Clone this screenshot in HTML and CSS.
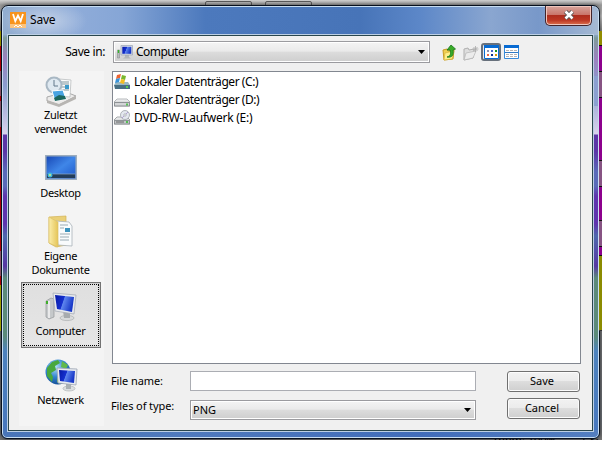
FILE: index.html
```
<!DOCTYPE html>
<html lang="de">
<head>
<meta charset="utf-8">
<title>Save</title>
<link rel="stylesheet" href="styles.css">
</head>
<body>
<svg width="0" height="0" class="defs">
  <defs>
    <linearGradient id="scr" x1="0" y1="0" x2="1" y2="0.3"><stop offset="0" stop-color="#0719a4"/><stop offset=".48" stop-color="#1530cf"/><stop offset=".52" stop-color="#5f86ee"/><stop offset="1" stop-color="#1838c8"/></linearGradient>
    <linearGradient id="desk" x1="0" y1="0" x2="1" y2="1"><stop offset="0" stop-color="#1746b4"/><stop offset=".5" stop-color="#3f86e8"/><stop offset="1" stop-color="#1c56c8"/></linearGradient>
    <linearGradient id="fold" x1="0" y1="0" x2="1" y2="0"><stop offset="0" stop-color="#fbedaa"/><stop offset="1" stop-color="#e5c558"/></linearGradient>
    <linearGradient id="disk" x1="0" y1="0" x2="0" y2="1"><stop offset="0" stop-color="#fafafa"/><stop offset="1" stop-color="#a9adb0"/></linearGradient>
    <radialGradient id="globe" cx=".4" cy=".3" r=".8"><stop offset="0" stop-color="#b5e2fb"/><stop offset=".5" stop-color="#3184cf"/><stop offset="1" stop-color="#0b3d86"/></radialGradient>
    <symbol id="pc" viewBox="0 0 32 30">
      <path d="M1 9l5-3 3 1v18l-5 2-3-2z" fill="#c5c8ca" stroke="#93979a" stroke-width=".7"/>
      <path d="M4 9v17" stroke="#f4f5f5" stroke-width="1.5"/><path d="M2 9v3" stroke="#3fae2b" stroke-width="2"/>
      <ellipse cx="22" cy="26" rx="7" ry="2.6" fill="#d8dadb" stroke="#a4a7aa" stroke-width=".6"/>
      <path d="M18 19l7 1v6h-6z" fill="#a7abae"/>
      <path d="M8 1l23 2-2 19-19-3z" fill="#e7e9ed" stroke="#a7adb7" stroke-width=".8"/>
      <path d="M10 3l19 2-2 15-15-3z" fill="url(#scr)"/>
    </symbol>
    <symbol id="pc-small" viewBox="0 0 16 14">
      <path d="M.5 5h2v8h-2z" fill="#b9bcbd" stroke="#8b8f91" stroke-width=".6"/><path d="M1.500 5v3" stroke="#35b52c" stroke-width="1.300"/>
      <path d="M8 10h4v2l2 1.500H6L8 12z" fill="#b4b7ba"/>
      <path d="M4 .5h11.500v9.500H4z" fill="#d9dce4" stroke="#9aa3b5" stroke-width=".7"/><path d="M5.300 1.800h9v7h-9z" fill="url(#scr)"/>
    </symbol>
  </defs>
</svg>
<div class="backdrop">
  <div class="ghost-tools"><i></i><i></i></div>
  <section class="window">
    <header class="titlebar">
      <svg class="app-icon" viewBox="0 0 16 16"><path fill="#f7941d" d="M0 0h16v12H0z"/><path fill="#fbc47e" d="M0 12h16v4H0z"/><path d="M3 2l2.300 7L8 3.500 10.700 9 13 2" fill="none" stroke="#fff" stroke-width="1.800"/><path d="M4 15l2-2 2 2 2-2 2 2" fill="none" stroke="#fff"/></svg>
      <span class="title">Save</span>
      <button class="close"><svg width="12" height="10" viewBox="0 0 12 10"><path d="M2.500 1.500l7 7M9.500 1.500l-7 7" stroke="#555" stroke-width="4.300"/><path d="M2.500 1.500l7 7M9.500 1.500l-7 7" stroke="#fff" stroke-width="2.500"/></svg></button>
    </header>
    <main class="client">
      <div class="lookin">
        <label>Save in:</label>
        <div class="combo location"><svg width="16" height="14"><use href="#pc-small"/></svg><span>Computer</span><b class="arrow"></b></div>
        <div class="tools">
          <svg width="14" height="17" viewBox="0 0 14 17"><path d="M1 6l4-1 1 2 6-1-1 9-9 1z" fill="#f0cf52" stroke="#c89d24"/><path d="M3 9l9-2-2 8-8 1z" fill="#fff08c" stroke="#d4af35" stroke-width=".6"/><path d="M5 13c4-1 4-4 3-7H5l4-5 4.500 4-2.500 1c1 5-1 8-6 7z" fill="#39ac28" stroke="#19751a" stroke-width=".8"/></svg>
          <svg width="16" height="17" viewBox="0 0 16 17"><path d="M1 5l4-1 1 2 5-1v4L10 14l-9 2z" fill="#dedede" stroke="#b0b0b0"/><path d="M3 9l10-2-3 7-9 2z" fill="#ececec" stroke="#b4b4b4" stroke-width=".7"/><path d="M12.500 2v6M9.500 5h6M10.500 3l4 4m0-4l-4 4" stroke="#aaa" stroke-width=".8"/></svg>
          <span class="toggle"><svg width="15" height="14" viewBox="0 0 15 14"><path fill="#fff" stroke="#086bd2" d="M.5.5h14v13H.5z"/><path fill="#086bd2" d="M0 0h15v3H0z"/><path fill="#8990b5" d="M3 5h2v2H3z"/><path fill="#4764c9" d="M7 5h2v2H7z"/><path fill="#159020" d="M11 5h2v2h-2z"/><path fill="#ef6846" d="M3 9h2v2H3z"/><path fill="#0b2f91" d="M7 9h2v2H7z"/><path fill="#d89a00" d="M11 9h2v2h-2z"/></svg></span>
          <svg width="15" height="14" viewBox="0 0 15 14"><path fill="#fff" stroke="#3689d8" d="M.5.5h14v13H.5z"/><path fill="#086bd2" d="M0 0h15v3H0z"/><path d="M2 5.500h11M2 9.500h11M2 11.500h11" stroke="#b4b4b4" stroke-dasharray="3 1"/><path d="M1 7.500h13" stroke="#2e79c4"/></svg>
        </div>
      </div>
      <div class="body">
        <nav class="places">
          <a class="place recent"><svg width="32" height="32" viewBox="0 0 32 32"><path d="M2 21l19-5 10 4-17 9-12-4z" fill="#ecebea" stroke="#aaa"/><path d="M2 24l12 4 17-8v3l-17 8-12-4z" fill="#b7b5b2"/><path d="M14 3l12 1-1 17-12-1z" fill="#fcfcfc" stroke="#b1b6b8" stroke-width=".7"/><path d="M16 6h8M16 8h8M16 11h4M16 14h8" stroke="#7f959c"/><path d="M20 9h4v4h-4z" fill="#3b9aca"/><circle cx="9" cy="9" r="7.500" fill="#dfe9f1" stroke="#a9b8c4" stroke-width="2"/><path d="M9 4v6h4" fill="none" stroke="#63798b"/><path d="M7 15l11-1 3 9-11 2z" fill="#49a4e2" stroke="#fff"/><path d="M9 22l5-3 6 1 1 3-11 2z" fill="#1d675e"/></svg><span>Zuletzt<br>verwendet</span></a>
          <a class="place desktop"><svg width="32" height="25" viewBox="0 0 32 25"><path fill="url(#desk)" stroke="#9cacbc" stroke-width="1.500" d="M.8.8h30.400v23.400H.8z"/><path d="M2 19h28v4H2z" fill="#233d59"/><path d="M8 19h22" stroke="#8eabc6" stroke-width=".7"/><circle cx="5" cy="20" r="2.500" fill="#43b7d8"/><circle cx="5" cy="20" r="1" fill="#d9e97c"/></svg><span>Desktop</span></a>
          <a class="place docs"><svg width="27" height="33" viewBox="0 0 27 33"><path d="M1 2l17-1v29L8 32l-7-4z" fill="#ead078" stroke="#d2b253" stroke-width=".7"/><path d="M8 6l13 1 3 4v20l-14-1z" fill="#f9fbfc" stroke="#a9b3b9" stroke-width=".8"/><path d="M12 10h8M12 13h4M12 19h10M12 22h9M12 25h9" stroke="#9aabb4"/><path d="M17 13h5v4h-5z" fill="#3a92bd"/><path d="M1 2l9 5v25l-9-4z" fill="url(#fold)" stroke="#dcc168" stroke-width=".7"/></svg><span>Eigene<br>Dokumente</span></a>
          <a class="place computer selected"><svg width="32" height="30"><use href="#pc"/></svg><span>Computer</span></a>
          <a class="place network"><svg width="33" height="33" viewBox="0 0 33 33"><circle cx="13" cy="13" r="12.500" fill="url(#globe)"/><path d="M2 9l5-6 6-2 2 3-5 3 1 4-5 3 2 4-1 5-5-6z" fill="#49a83f"/><path d="M17 2l6 4-2 4-5-2zM12 19l5 2-2 4-3-2z" fill="#62b94b"/><ellipse cx="24" cy="29.500" rx="6" ry="2.500" fill="#dcdfe1" stroke="#a7abae" stroke-width=".6"/><path d="M21 24l5 1v5h-5z" fill="#aab0b4"/><path d="M12 9l20 1-1 16-18-2z" fill="#e7eaef" stroke="#9ca5b3" stroke-width=".8"/><path d="M14 11l16 1-1 12-14-2z" fill="url(#scr)"/></svg><span>Netzwerk</span></a>
        </nav>
        <div class="right">
          <ul class="files">
            <li><svg width="16" height="16" viewBox="0 0 16 16"><path d="M2 8h12l2 3H0z" fill="#9bb8c3"/><path d="M0 11h16v4H1z" fill="#486f83"/><path d="M13 12v2" stroke="#5bed40" stroke-width="1.500"/><path d="M3 1l4-1-1 4-4 1z" fill="#ee6430"/><path d="M8 1l4 1-1 4-4-1z" fill="#7ab82e"/><path d="M2 5l4-1-1 4-4 1z" fill="#3994da"/><path d="M7 5l4 1-1 4-4-1z" fill="#f4bd24"/></svg>Lokaler Datenträger (C:)</li>
            <li><svg width="16" height="16" viewBox="0 0 16 16"><path d="M3 7h10l3 3v4H0v-4z" fill="url(#disk)" stroke="#a2a6a9" stroke-width=".8"/><path d="M.4 10.500h15.200V14H.4z" fill="#d3d5d7" stroke="#7b8083" stroke-width=".8"/><path d="M13 11.500v2" stroke="#2dbd28" stroke-width="1.500"/></svg>Lokaler Datenträger (D:)</li>
            <li><svg width="16" height="16" viewBox="0 0 16 16"><path d="M3 7h10l3 3v4H0v-4z" fill="url(#disk)" stroke="#8e9295" stroke-width=".8"/><circle cx="11" cy="5" r="4.500" fill="#e4e8ef" stroke="#9fa5aa" stroke-width=".8"/><path d="M11 5l3-3M11 5L8 8" stroke="#b3a3d3"/><circle cx="11" cy="5" r="1.200" fill="#fff" stroke="#898f94" stroke-width=".6"/><path d="M.4 10.500h15.200V14H.4z" fill="#c4c7c9" stroke="#767b7e" stroke-width=".7"/><path d="M2 12h8" stroke="#666"/><path d="M13 11v2" stroke="#2dbd28" stroke-width="1.500"/></svg>DVD-RW-Laufwerk (E:)</li>
          </ul>
          <div class="form">
            <label>File name:</label><div class="field"></div><button class="btn">Save</button>
            <label class="type-label">Files of type:</label><div class="combo type"><span>PNG</span><b class="arrow"></b></div><button class="btn">Cancel</button>
          </div>
        </div>
      </div>
    </main>
  </section>
  <div class="strip strip-left"></div>
  <div class="strip strip-right"></div>
  <div class="behind"><span>Zoom: 100%</span><span>| Scal</span></div>
</div>
</body>
</html>
```
FILE: styles.css
```
* { box-sizing: border-box; }
body { margin: 0; background: #fff; color: #000; font: 11px/14px "Noto Sans", sans-serif; overflow: hidden; }
svg { display: block; flex: none; }
.defs { position: absolute; }
.backdrop { position: relative; width: 602px; height: 440px; padding: 5px 0 0 1px; overflow: hidden; background: linear-gradient(#d0d0d0, #999 5px, #c9c9c9 16px, #888 30px, #777 300px, #6d7177 420px, #747474); }
.ghost-tools { position: absolute; left: 205px; top: 1px; display: flex; gap: 13px; }
.ghost-tools i { width: 47px; height: 8px; border: 1px solid #5b5b5b; border-radius: 2px; }
.strip { position: absolute; top: 31px; height: 300px; }
.strip-left { left: 0; width: 1px; background: linear-gradient(#918c00 0 15px, #a80008 15px 40px, #875368 40px 65px, #a80008 65px 70px, #875368 70px 96px, #a80008 96px 220px, #875368 220px 245px, #a80008 245px 254px, #9b9d00 254px); }
.strip-right { right: 0; width: 3px; background: linear-gradient(#918c00 0 14px, #111 14px 15px, #8d008d 15px 40px, #111 40px 41px, #875383 41px 66px, #111 66px 67px, #8d008d 67px 129px, #111 129px 130px, #875383 130px 155px, #111 155px 156px, #8d008d 156px 189px, #111 189px 190px, #875383 190px 215px, #111 215px 216px, #8d008d 216px 224px, #111 224px 225px, #8b8b00 225px 299px, #333 299px); }
.behind { position: absolute; left: 492px; top: 433px; height: 7px; display: flex; gap: 25px; white-space: nowrap; clip-path: inset(6px 0 0 0); }
.window { position: relative; width: 599px; height: 434px; padding: 0 6px 7px 6px; display: flex; flex-direction: column; border: 1px solid #07101e; border-radius: 7px 7px 6px 6px; box-shadow: inset 0 0 0 1px #c7ddf1, 0 0 4px #0009; background: linear-gradient(90deg, #4975b8, #4f7abc 30%, #416dba 70%, #547fc0) bottom / 100% 8px no-repeat, linear-gradient(90deg, #8ba0d0 0 0) right 70px / 7px 30px no-repeat, linear-gradient(#8eacd3 0 28px, #7d9b9a 32px, #9b81bd 52px, #8a9dce 80px, #d9d2ec 128px, #5b36a6 129px 145px, #596bb8 166px 180px, #5e35ad 190px 218px, #4d69ad 230px, #5637a3 260px, #5b8a79 272px 330px, #4c82bd 345px, #4676be); }
.titlebar { flex: none; height: 28px; margin: 1px -5px 0; padding: 5px 6px 0 7px; display: flex; border-radius: 5px 5px 0 0; background: radial-gradient(ellipse 42px 20px at 42px 14px, #d0dbeccc, #d0dbec00), linear-gradient(90deg, #92adcf 0, #8facd9 12%, #86a6d6 20%, #4c79bd 34%, #4774b8 60%, #5c87c8 70%, #8aa6d0 82%, #7898c9 90%, #a5b9d3); }
.app-icon { width: 16px; height: 16px; }
.title { margin: -1px 0 0 4px; font-size: 12px; line-height: 17px; letter-spacing: -.2px; }
.close { width: 47px; height: 20px; margin: -6px 0 0 auto; padding: 0; display: grid; place-items: center; border: 1px solid #42242a; border-top: 0; border-radius: 0 0 5px 5px; box-shadow: inset 0 0 0 1px #efc6bd; background: linear-gradient(#d6a59d, #c97368 48%, #ae2d1e 50%, #bd3824 75%, #dc7250); }
.close svg { margin-top: -2px; }
.client { flex: 1; min-height: 0; padding: 5px 11px 0 13px; border: 1px solid #29464d; box-shadow: 0 0 0 1px #bccfe4; background: #f0f0f0; }
.lookin { height: 22px; display: flex; align-items: center; }
.lookin label { width: 83px; margin-right: 8px; text-align: right; font-size: 12px; letter-spacing: -.4px; }
.combo { display: flex; align-items: center; height: 22px; padding: 0 4px 0 3px; border: 1px solid #9b9b9f; box-shadow: inset 0 0 0 1px #fff; background: linear-gradient(#f4f4f4, #eaeaea 46%, #dcdcdc 50%, #cecece); }
.arrow { width: 7px; height: 4px; margin-left: auto; background: #000; clip-path: polygon(0 0, 100% 0, 50% 100%); }
.location { width: 317px; }
.location span { margin-left: 3px; font-size: 12px; letter-spacing: -.55px; }
.tools { display: flex; align-items: center; gap: 3px; margin-left: 12px; }
.tools > svg:nth-child(2) { margin-left: 4px; }
.toggle { width: 20px; height: 18px; margin-left: -1px; display: grid; place-items: center; border: 2px solid #68717c; border-radius: 3px; background: #e7eaf0; }
.body { display: flex; margin-top: 8px; }
.places { width: 85px; height: 355px; flex: none; margin: 0 8px 0 -3px; padding-left: 2px; background: #f4f4f4; }
.place { width: 80px; height: 66px; display: flex; flex-direction: column; align-items: center; text-align: center; }
.place span { white-space: nowrap; letter-spacing: -.3px; margin-left: -1px; }
.recent { height: 76px; padding-top: 5px; }
.desktop { height: 62px; padding-top: 8px; }
.desktop span { margin-top: 6px; }
.docs { height: 73px; padding-top: 6px; }
.docs span { margin-top: 1px; }
.selected { border: 1px solid #737373; padding-top: 9px; box-shadow: inset 0 0 0 1px #d0d0d0; outline: 1px dotted #000; outline-offset: -3px; background: linear-gradient(#dfdfdf, #e6e6e6); }
.selected span { margin-top: 2px; }
.network { padding-top: 11px; }
.network span { margin-top: 1px; }
.files { width: 469px; height: 293px; margin: 0; padding: 1px; list-style: none; border: 1px solid #828790; background: #fff; }
.files li { height: 18px; display: flex; align-items: center; gap: 4px; font-size: 12px; letter-spacing: -.44px; }
.files li:last-child { height: 17px; letter-spacing: -.25px; }
.form { display: grid; grid-template-columns: 78px 286px 104px; column-gap: 0; row-gap: 6px; margin-top: 7px; }
.form .btn { margin-left: 31px; }
.form label { margin-left: -1px; line-height: 20px; letter-spacing: -.1px; }
.form .type-label { line-height: 16px; }
.field { height: 20px; border: 1px solid #abadb3; background: #fff; }
.type { height: 20px; margin-top: 2px; padding-left: 2px; }
.btn { width: 73px; height: 21px; padding: 0 3px 1px 0; font: inherit; border: 1px solid #707070; border-radius: 3px; box-shadow: inset 0 0 0 1px #fcfcfc; background: linear-gradient(#f2f2f2, #ebebeb 48%, #dddddd 50%, #cfcfcf); }
```
